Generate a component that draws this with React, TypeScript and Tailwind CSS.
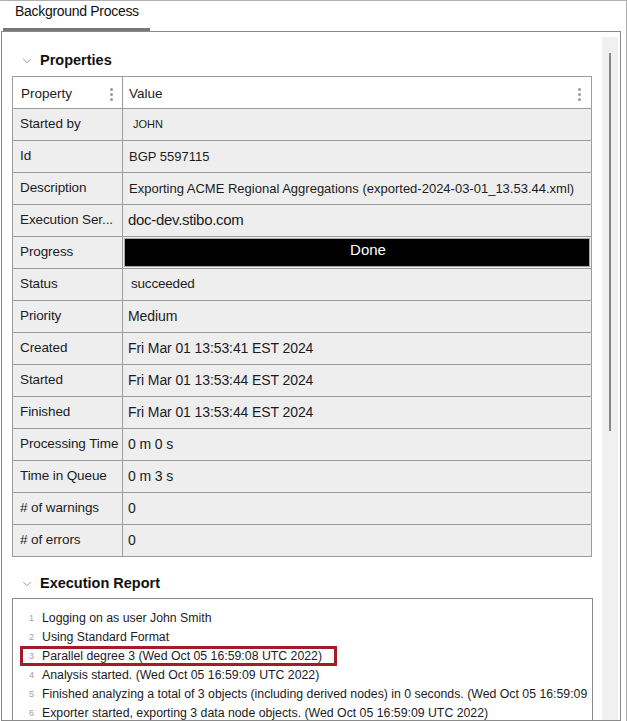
import { ChevronDown } from 'lucide-react';

const rows: { label: string; value: string; kind?: string }[] = [
  { label: 'Started by', value: 'JOHN', kind: 'small' },
  { label: 'Id', value: 'BGP 5597115', kind: 'arial' },
  { label: 'Description', value: 'Exporting ACME Regional Aggregations (exported-2024-03-01_13.53.44.xml)', kind: 'arial' },
  { label: 'Execution Ser...', value: 'doc-dev.stibo.com', kind: 'big' },
  { label: 'Progress', value: 'Done', kind: 'progress' },
  { label: 'Status', value: 'succeeded', kind: 'status' },
  { label: 'Priority', value: 'Medium' },
  { label: 'Created', value: 'Fri Mar 01 13:53:41 EST 2024' },
  { label: 'Started', value: 'Fri Mar 01 13:53:44 EST 2024' },
  { label: 'Finished', value: 'Fri Mar 01 13:53:44 EST 2024' },
  { label: 'Processing Time', value: '0 m 0 s' },
  { label: 'Time in Queue', value: '0 m 3 s' },
  { label: '# of warnings', value: '0' },
  { label: '# of errors', value: '0' },
];

const report = [
  'Logging on as user John Smith',
  'Using Standard Format',
  'Parallel degree 3 (Wed Oct 05 16:59:08 UTC 2022)',
  'Analysis started. (Wed Oct 05 16:59:09 UTC 2022)',
  'Finished analyzing a total of 3 objects (including derived nodes) in 0 seconds. (Wed Oct 05 16:59:09 UTC 2022)',
  'Exporter started, exporting 3 data node objects. (Wed Oct 05 16:59:09 UTC 2022)',
];

function Kebab() {
  return (
    <span className="flex flex-col gap-[2px]">
      <span className="w-[3px] h-[3px] rounded-full bg-[#9a9a9a]" />
      <span className="w-[3px] h-[3px] rounded-full bg-[#9a9a9a]" />
      <span className="w-[3px] h-[3px] rounded-full bg-[#9a9a9a]" />
    </span>
  );
}

function Section({ title }: { title: string }) {
  return (
    <div className="h-[24px] flex items-center pl-[8px] pt-[2px]">
      <ChevronDown className="w-[14px] h-[14px] text-[#8a8a8a]" strokeWidth={1.5} />
      <span className="ml-[6px] text-[14.5px] font-bold text-[#111]">{title}</span>
    </div>
  );
}

function ValueCell({ value, kind }: { value: string; kind?: string }) {
  if (kind === 'progress') {
    return (
      <div className="flex-1 h-full p-[1px]">
        <div className="h-full bg-black border border-[#a8a8a8] flex items-center justify-center pl-[22px] pb-[4px]">
          <span className="text-white text-[15px]">{value}</span>
        </div>
      </div>
    );
  }
  let cls = 'pl-[5px] text-[14px] tracking-[-0.1px]';
  if (kind === 'small') cls = 'pl-[10px] text-[11px]';
  if (kind === 'arial') cls = 'pl-[6px] text-[13px]';
  if (kind === 'big') cls = 'pl-[5px] text-[15px] tracking-[-0.3px]';
  if (kind === 'status') cls = 'pl-[8px] text-[13.5px] tracking-[-0.2px]';
  return <div className={`flex-1 whitespace-nowrap overflow-hidden ${cls}`}>{value}</div>;
}

export default function App() {
  return (
    <div className="w-[627px] h-[721px] bg-white border-t border-r border-[#b0b0b0] overflow-hidden font-['Liberation_Sans',Arial,sans-serif] text-[#1c1c24]">
      {/* tab strip */}
      <div className="h-[30px] pl-[3px] flex items-end">
        <div className="w-[147px] h-[30px] border-b-[3px] border-[#777] pl-[12px] text-[14px] tracking-[-0.3px] text-[#111]">
          Background Process
        </div>
      </div>
      <div className="ml-[1px] w-[620px] h-[690px] border-t border-l border-r border-b border-[#8a8a8a] flex">
        <div className="flex-1 pl-[10px] pr-[10px] flex flex-col min-w-0">
          <div className="mt-[16px]">
            <Section title="Properties" />
          </div>
          <div className="mt-[4px] w-[580px] border-t border-l border-r border-[#9c9c9c]">
            <div className="h-[32px] flex items-center border-b border-[#9c9c9c] bg-white text-[13.5px]">
              <div className="w-[110px] h-full border-r border-[#9c9c9c] flex items-center justify-between pl-[8px] pr-[9px] pt-[3px]">
                <span>Property</span>
                <Kebab />
              </div>
              <div className="flex-1 h-full flex items-center justify-between pl-[6px] pr-[10px] pt-[3px]">
                <span>Value</span>
                <Kebab />
              </div>
            </div>
            {rows.map((r) => (
              <div key={r.label} className="h-[32px] flex items-center border-b border-[#9c9c9c] bg-[#eeeeee]">
                <div className="w-[110px] shrink-0 h-full border-r border-[#9c9c9c] flex items-center pl-[7px] text-[13.5px] tracking-[-0.1px] whitespace-nowrap overflow-hidden">
                  {r.label}
                </div>
                <ValueCell value={r.value} kind={r.kind} />
              </div>
            ))}
          </div>
          <div className="mt-[14px]">
            <Section title="Execution Report" />
          </div>
          <div className="mt-[3px] w-[581px] flex-1 border-t border-l border-r border-[#8a8a8a] pt-[10px] pr-[4px]">
            <div className="overflow-hidden">
              {report.map((line, i) => (
                <div key={i} className="relative h-[19px] flex items-center whitespace-nowrap text-[12.3px]">
                  <span className="w-[22px] shrink-0 text-right text-[9px] text-[#a0a0a0] pr-[1px]">{i + 1}</span>
                  <span className="ml-[7px]">{line}</span>
                  {i === 2 && (
                    <span className="absolute left-[7px] -top-[1px] w-[317px] h-[20px] border-[3px] border-[#a31c26]" />
                  )}
                </div>
              ))}
            </div>
          </div>
        </div>
        {/* scrollbar */}
        <div className="w-[16px] shrink-0 mt-[5px] mr-[2px] bg-[#f0f0f0] flex justify-center">
          <div className="w-[2px] h-[378px] mt-[16px] bg-[#888]" />
        </div>
      </div>
    </div>
  );
}
